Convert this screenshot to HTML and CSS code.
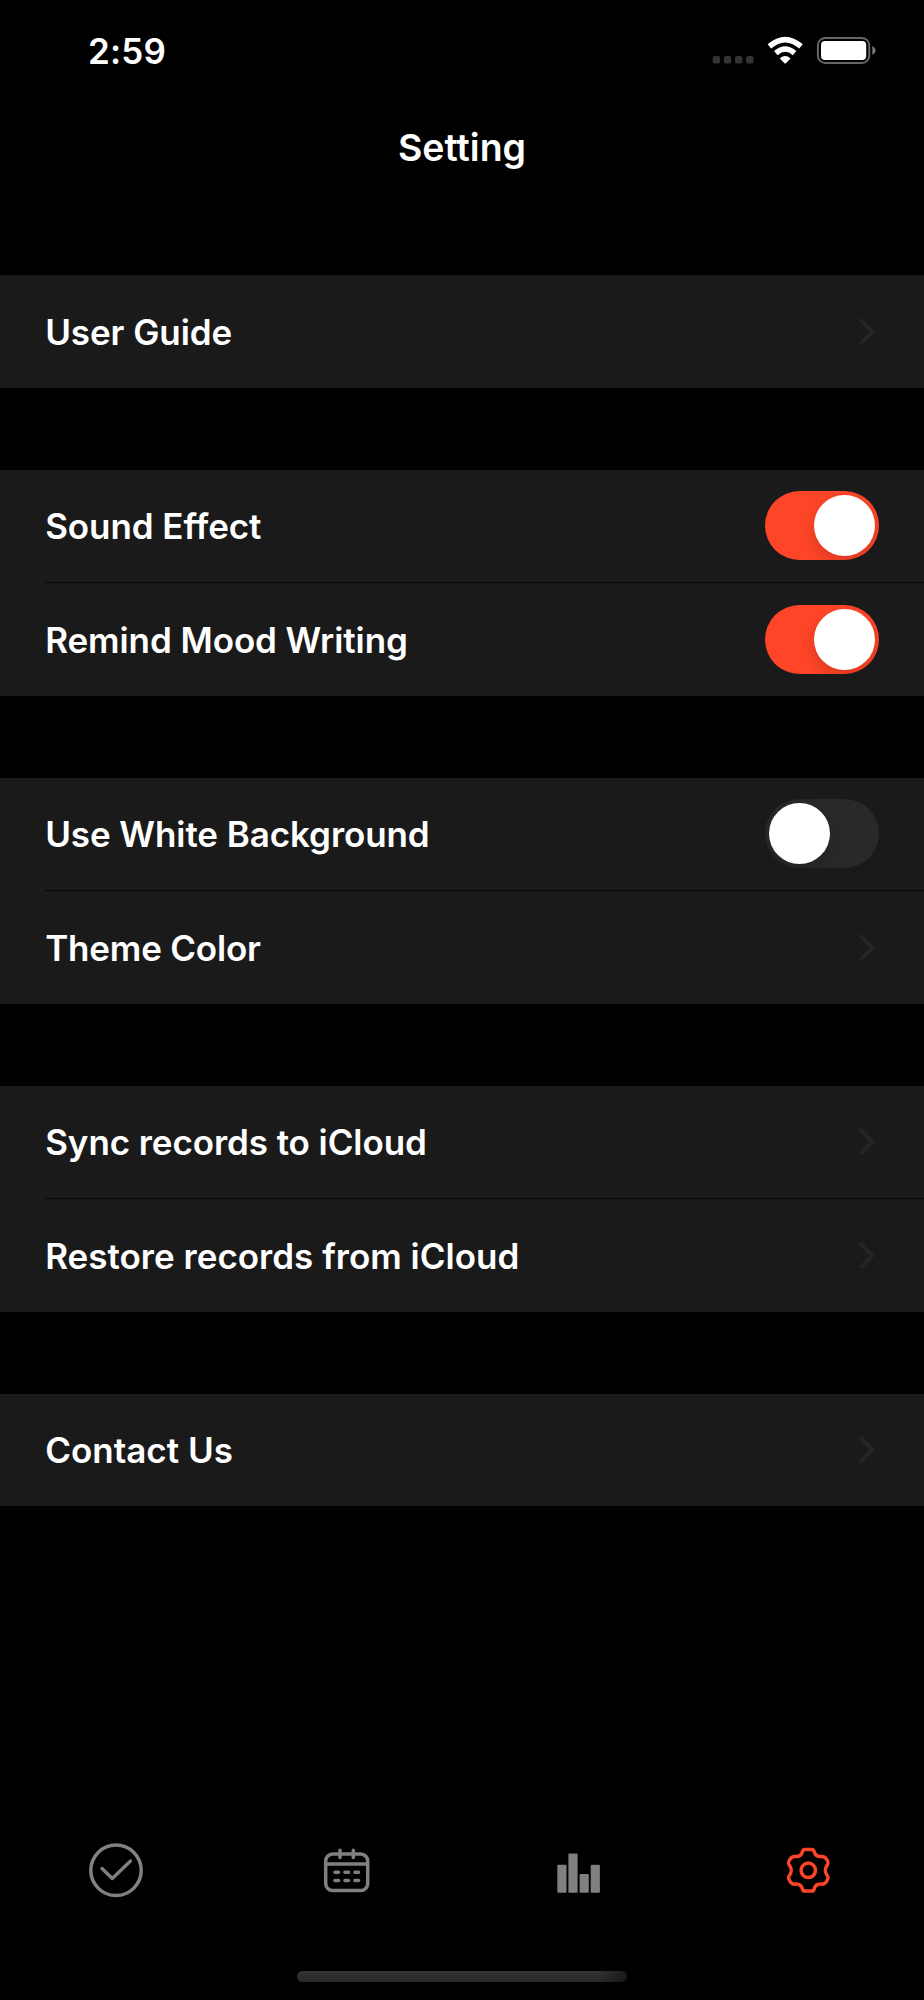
FILE: index.html
```html
<!DOCTYPE html>
<html lang="en">
<head>
<meta charset="utf-8">
<title>Setting</title>
<link rel="stylesheet" href="styles.css">
</head>
<body>
<div class="screen">
  <header class="status">
    <span class="time">2:59</span>
    <svg class="status-icons" width="210" height="60" viewBox="0 0 210 60">
      <g fill="#333"><rect x="22.7" y="36" width="7.4" height="7.4" rx="2"/><rect x="33.8" y="36" width="7.4" height="7.4" rx="2"/><rect x="45" y="36" width="7.4" height="7.4" rx="2"/><rect x="56.1" y="36" width="7.4" height="7.4" rx="2"/></g>
      <g fill="none" stroke="#fff" stroke-width="5.4"><path d="M79.4 26.4Q95.2 12.8 111 26.4"/><path d="M85.8 33.1Q95.2 25 104.6 33.1"/></g>
      <path d="M89.8 38.5Q95.2 33.7 100.6 38.5L95.9 43.2Q95.2 43.9 94.5 43.2Z" fill="#fff"/>
      <rect x="127.9" y="17.9" width="51.4" height="25.2" rx="7.5" fill="none" stroke="#666" stroke-width="2"/>
      <rect x="131" y="21" width="45.2" height="19" rx="4" fill="#fff"/>
      <path d="M182.3 26Q185.6 27.7 185.6 30.4T182.3 34.8Z" fill="#777"/>
    </svg>
  </header>
  <h1 class="title">Setting</h1>
  <main class="groups">
    <section class="group first">
      <div class="row"><span class="label">User Guide</span><svg class="chevron" viewBox="0 0 16 28"><path d="M2.3 2.3 13.3 13.6 2.3 24.8"/></svg></div>
    </section>
    <section class="group">
      <div class="row"><span class="label">Sound Effect</span><span class="switch on"><span class="knob"></span></span></div>
      <div class="row"><span class="label">Remind Mood Writing</span><span class="switch on"><span class="knob"></span></span></div>
    </section>
    <section class="group">
      <div class="row"><span class="label">Use White Background</span><span class="switch"><span class="knob"></span></span></div>
      <div class="row"><span class="label theme">Theme Color</span><svg class="chevron" viewBox="0 0 16 28"><path d="M2.3 2.3 13.3 13.6 2.3 24.8"/></svg></div>
    </section>
    <section class="group">
      <div class="row"><span class="label">Sync records to iCloud</span><svg class="chevron" viewBox="0 0 16 28"><path d="M2.3 2.3 13.3 13.6 2.3 24.8"/></svg></div>
      <div class="row"><span class="label restore">Restore records from iCloud</span><svg class="chevron" viewBox="0 0 16 28"><path d="M2.3 2.3 13.3 13.6 2.3 24.8"/></svg></div>
    </section>
    <section class="group">
      <div class="row"><span class="label contact">Contact Us</span><svg class="chevron" viewBox="0 0 16 28"><path d="M2.3 2.3 13.3 13.6 2.3 24.8"/></svg></div>
    </section>
  </main>
  <nav class="tabs">
    <svg class="tab" viewBox="0 0 100 90"><circle cx="46" cy="45.3" r="25.2"/><path d="M32 43.5 42.3 53.5 60.5 36" stroke-width="3.3"/></svg>
    <svg class="tab" viewBox="0 0 100 90"><rect x="25.7" y="29" width="42" height="36.5" rx="7"/><path d="M26 39H67.5M40 25.3V32.5M53.3 25.3V32.5"/><path d="M35 47.2H38.5M45 47.2H48.5M55 47.2H58.5M35 55.5H38.5M45 55.5H48.5M55 55.5H58.5" stroke-width="3.6"/></svg>
    <svg class="tab bars" viewBox="0 0 100 90"><rect x="27.3" y="39.7" width="9.2" height="28" rx="1"/><rect x="38.4" y="28.5" width="9.2" height="39.2" rx="1"/><rect x="49.6" y="49" width="9.2" height="18.7" rx="1"/><rect x="60.7" y="39.7" width="9.2" height="28" rx="1"/></svg>
    <svg class="tab active" viewBox="0 0 100 90"><circle cx="48.3" cy="45.3" r="7.2"/><path d="M44.8 24.5H51.8Q53.4 24.5 54.1 26.5C55.1 30 57.4 31.7 60.7 31.5C63.5 31.1 65.2 31.7 66.5 34.1C68.4 37.2 68.7 38.4 67.1 40.3C64.8 43.2 64.8 47.4 67.1 50.3C68.7 52.2 68.4 53.4 66.5 56.5C65.2 58.9 63.5 59.5 60.7 59.1C57.4 58.9 55.1 60.6 54.1 64.1Q53.4 66.1 51.8 66.1H44.8Q43.2 66.1 42.5 64.1C41.5 60.6 39.2 58.9 35.9 59.1C33.1 59.5 31.4 58.9 30.1 56.5C28.2 53.4 27.9 52.2 29.5 50.3C31.8 47.4 31.8 43.2 29.5 40.3C27.9 38.4 28.2 37.2 30.1 34.1C31.4 31.7 33.1 31.1 35.9 31.5C39.2 31.7 41.5 30 42.5 26.5Q43.2 24.5 44.8 24.5Z"/></svg>
  </nav>
  <div class="home"></div>
</div>
</body>
</html>
```
FILE: styles.css
```css
* { box-sizing: border-box; }
body { margin: 0; background: #000; }
.screen {
  width: 924px;
  height: 2000px;
  display: flex;
  flex-direction: column;
  background: #000;
  color: #fff;
  font-family: Inter, "Liberation Sans", sans-serif;
  font-weight: 560;
  overflow: hidden;
}
.status {
  height: 100px;
  padding: 20px 24px 0 88px;
  display: flex;
  justify-content: space-between;
}
.time { font-size: 35px; line-height: 62px; letter-spacing: .2px; }
.title {
  margin: 0;
  height: 175px;
  padding-top: 23px;
  text-align: center;
  font-size: 37.5px;
  line-height: 50px;
  font-weight: 560;
}
.groups { display: flex; flex-direction: column; gap: 82px; }
.group { background: #1a1a1a; }
.row {
  height: 112px;
  padding: 0 45px;
  display: flex;
  align-items: center;
  justify-content: space-between;
}
.first .row { height: 113px; }
.row + .row {
  height: 114px;
  padding-top: 1px;
  background: linear-gradient(#060606, #060606) 45px 0 / 879px 1px no-repeat;
}
.label { font-size: 35px; line-height: 50px; white-space: nowrap; letter-spacing: -.08px; padding-left: .2px; }
.label.theme { letter-spacing: -.2px; }
.label.restore { letter-spacing: .01px; }
.label.contact { letter-spacing: 0; }
.chevron {
  width: 16px;
  height: 28px;
  margin-right: 4px;
  fill: none;
  stroke: #252527;
  stroke-width: 4;
  stroke-linecap: round;
  stroke-linejoin: round;
}
.switch {
  width: 114px;
  height: 69px;
  padding: 4px;
  margin: 0 -.3px 1px 0;
  border-radius: 35px;
  background: #292929;
  display: flex;
  overflow: hidden;
}
.switch.on { background: #ff4527; justify-content: flex-end; }
.knob {
  width: 61px;
  height: 61px;
  border-radius: 50%;
  background: #fff;
  box-shadow: 0 6px 16px rgba(0, 0, 0, .16);
}
.tabs {
  margin-top: 319px;
  height: 90px;
  padding: 0 64px 0 70px;
  display: flex;
  justify-content: space-between;
}
.tab {
  width: 100px;
  height: 90px;
  fill: none;
  stroke: #808080;
  stroke-width: 3.5;
  stroke-linecap: round;
  stroke-linejoin: round;
}
.bars { fill: #808080; stroke: none; }
.active { stroke: #ff4527; }
.home {
  width: 330px;
  height: 11px;
  margin: 56px 0 0 297px;
  border-radius: 6px;
  background: linear-gradient(100deg, transparent 91%, rgba(0, 0, 0, .45)), linear-gradient(#323232, #292929);
}
```
